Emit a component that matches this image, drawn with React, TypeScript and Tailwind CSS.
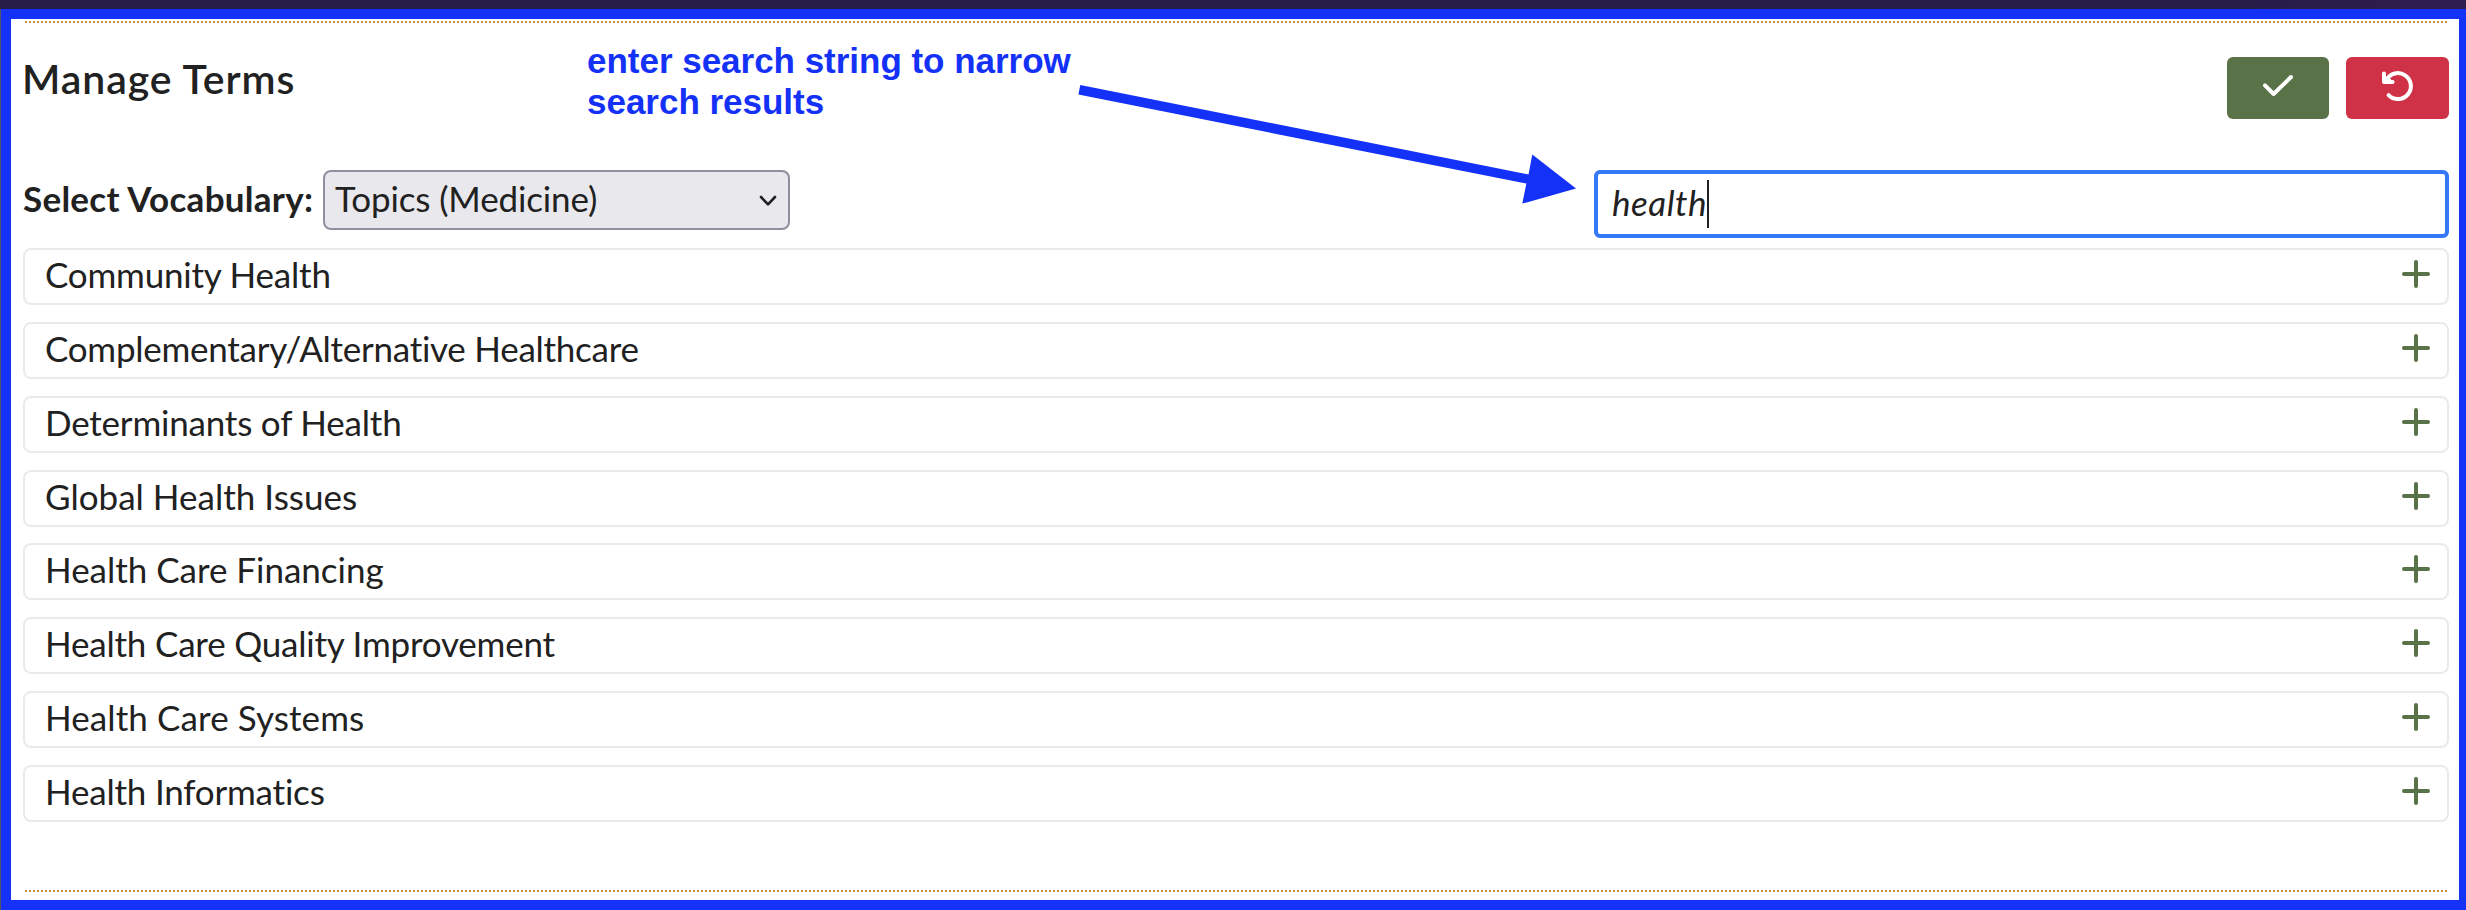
type Term = { name: string; tracking: string };

const terms: Term[] = [
  { name: "Community Health", tracking: "tracking-[-0.2px]" },
  { name: "Complementary/Alternative Healthcare", tracking: "tracking-[-0.26px]" },
  { name: "Determinants of Health", tracking: "tracking-[-0.2px]" },
  { name: "Global Health Issues", tracking: "tracking-[0.02px]" },
  { name: "Health Care Financing", tracking: "tracking-[-0.02px]" },
  { name: "Health Care Quality Improvement", tracking: "tracking-[-0.2px]" },
  { name: "Health Care Systems", tracking: "tracking-[0.1px]" },
  { name: "Health Informatics", tracking: "tracking-[-0.2px]" },
];

function DottedRule() {
  return (
    <div className="mx-[2px] h-[2px] shrink-0 bg-[repeating-linear-gradient(90deg,#cc8a3e_0_2px,#ffffff_2px_4px)]" />
  );
}

function CheckIcon() {
  return (
    <svg width="32" height="24" viewBox="0 0 32 24" fill="none" stroke="white" strokeWidth="4" strokeLinecap="round" strokeLinejoin="round">
      <path d="M3 11.4 L11.6 20 L29 3" />
    </svg>
  );
}

function UndoIcon() {
  return (
    <svg className="-ml-[2px]" width="34" height="34" viewBox="0 0 34 34" fill="none" stroke="white" strokeWidth="4" strokeLinecap="round" strokeLinejoin="round">
      <path d="M8.6 26.2 A13 13 0 1 0 6.4 11" />
      <path d="M4 4.6 V12.9 H12.6" />
      <path d="M4 12.9 L8.6 8.2 L11 11 Z" fill="white" strokeWidth="1" />
    </svg>
  );
}

function PlusIcon() {
  return (
    <svg className="mt-[10px]" width="28" height="28" viewBox="0 0 28 28" fill="none" stroke="#5a7248" strokeWidth="4" strokeLinecap="round">
      <path d="M14 2 V26 M2 14 H26" />
    </svg>
  );
}

function TermRow({ name, tracking }: Term) {
  return (
    <li className="flex h-[57px] items-start justify-between rounded-[8px] border-2 border-[#e8ebee] pl-[20px] pr-[17px]">
      <span className={`text-[35px] leading-[49px] ${tracking}`}>{name}</span>
      <button type="button" aria-label="Add term">
        <PlusIcon />
      </button>
    </li>
  );
}

function Annotation() {
  return (
    <>
      <p className="absolute left-[587px] top-[40px] whitespace-nowrap font-['Liberation_Sans',sans-serif] text-[35px] font-bold leading-[41px] tracking-[-0.02px] text-[#1431f8]">
        enter search string to narrow
        <br />
        search results
      </p>
      <svg className="absolute left-[1070px] top-[80px]" width="510" height="130" viewBox="1070 80 510 130">
        <polygon
          fill="#1431f8"
          points="1080.3,85 1528.5,174.4 1532.3,154.6 1576,188.6 1522.3,203.6 1526.4,183.6 1078.4,94.6"
        />
      </svg>
    </>
  );
}

export default function App() {
  return (
    <div className="relative flex h-[910px] w-[2466px] flex-col overflow-hidden bg-[#56555c] font-['Lato',sans-serif] text-[#212121] [font-variant-ligatures:none]">
      <div className="h-[9px] shrink-0 bg-linear-to-r from-[#251c47] from-90% to-[#301d50]" />
      <main className="ml-px flex flex-1 flex-col border-y-[10px] border-l-[10px] border-r-[7px] border-[#1431f8] bg-white pb-[8px] pl-[12px] pr-[10px] pt-[2px]">
        <DottedRule />
        <header className="mt-[34px] flex h-[62px] items-start justify-between">
          <h1 className="-ml-px text-[41px] font-semibold leading-[44px] tracking-[0.93px]">Manage Terms</h1>
          <div className="flex gap-[17px]">
            <button type="button" aria-label="Save" className="flex h-[62px] w-[102px] items-start justify-center rounded-[6px] bg-[#5a7248] pt-[17px]">
              <CheckIcon />
            </button>
            <button type="button" aria-label="Undo" className="flex h-[62px] w-[103px] items-start justify-center rounded-[6px] bg-[#cf3147] pt-[12px]">
              <UndoIcon />
            </button>
          </div>
        </header>

        <div className="mt-[51px] flex h-[68px] items-start justify-between">
          <div className="flex items-start">
            <span className="w-[300px] text-[35px] font-bold leading-[57px] tracking-[0.28px]">
              Select Vocabulary:
            </span>
            <div className="flex h-[60px] w-[467px] items-start justify-between rounded-[8px] border-2 border-[#8f8f9d] bg-[#e9e9ed] pl-[10px] pr-[11px]">
              <span className="text-[35px] leading-[53px] tracking-[-0.136px]">Topics (Medicine)</span>
              <svg className="mt-[22px]" width="18" height="14" viewBox="0 0 18 14" fill="none" stroke="#212121" strokeWidth="2.6" strokeLinecap="round" strokeLinejoin="round">
                <path d="M2 3 L9 10.4 L16 3" />
              </svg>
            </div>
          </div>
          <div className="flex h-[68px] w-[855px] items-start rounded-[6px] border-4 border-[#3478f6] pl-[14px]">
            <span className="w-[95px] text-[35px] italic leading-[56px] tracking-[0.5px]">health</span>
            <span className="mt-[6px] h-[48px] w-[2px] bg-[#212121]" />
          </div>
        </div>

        <ul className="mt-[10px] flex flex-col gap-[16.85px]">
          {terms.map((t) => (
            <TermRow key={t.name} {...t} />
          ))}
        </ul>
        <div className="flex-1" />
        <DottedRule />
      </main>
      <Annotation />
    </div>
  );
}
